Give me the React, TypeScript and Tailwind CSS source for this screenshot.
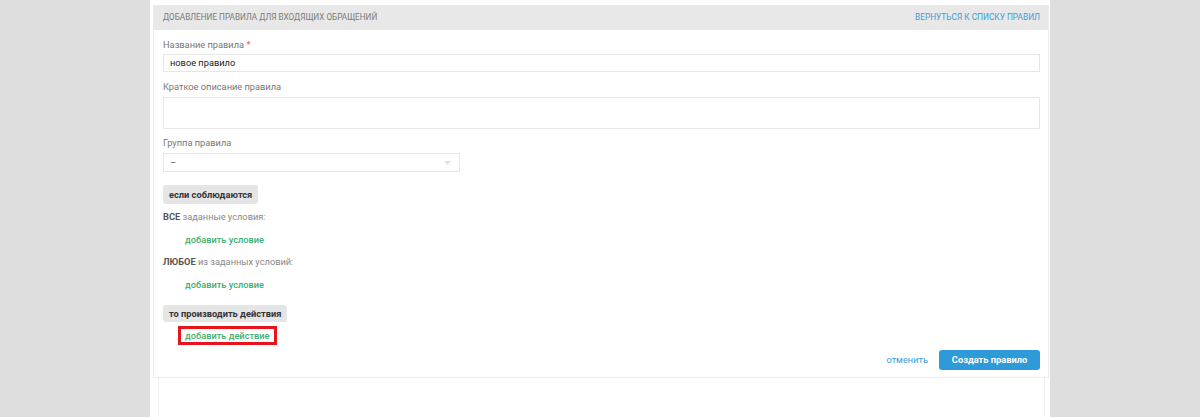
import React from "react";

export default function App() {
  const font = { fontFamily: "Roboto, 'Noto Sans', sans-serif" };
  return (
    <div className="w-full h-[417px] bg-[#dedede] flex justify-center overflow-hidden" style={font}>
      <div className="w-[900px] bg-white pt-[5px] pl-[3px] pr-[1px] flex flex-col">
        <div className="border border-[#ececec] border-t-0 flex flex-col h-[373px]">
          <div className="h-[25px] bg-[#e8e8e8] flex items-center justify-between pl-[9px] pr-[8px] shrink-0">
            <span className="text-[8.2px] text-[#7a7a7a] uppercase">Добавление правила для входящих обращений</span>
            <span className="text-[8.3px] text-[#3d9bd6] uppercase">Вернуться к списку правил</span>
          </div>
          <div className="pl-[9px] pr-[8px] flex flex-col text-[9.25px]">
            <div className="mt-[8px] text-[#777] leading-[14px]">
              Название правила <span className="text-[#e25b5b]">*</span>
            </div>
            <div className="mt-[2px] h-[18px] border border-[#e6e6e6] flex items-center pl-[6px] text-[#222]">новое правило</div>
            <div className="mt-[8px] text-[#777] leading-[14px]">Краткое описание правила</div>
            <div className="mt-[3px] h-[32px] border border-[#e6e6e6]"></div>
            <div className="mt-[7px] text-[#777] leading-[14px]">Группа правила</div>
            <div className="mt-[3px] h-[19px] w-[297px] border border-[#e6e6e6] flex items-center justify-between pl-[6px] pr-[8px] text-[#555]">
              <span>–</span>
              <svg width="7" height="4" viewBox="0 0 7 4"><path d="M0 0 L7 0 L3.5 4 Z" fill="#e0e0e0" /></svg>
            </div>
            <div className="mt-[13px] self-start h-[19px] px-[6px] rounded-[3px] bg-[#e5e5e5] flex items-center font-bold text-[#333]">если соблюдаются</div>
            <div className="mt-[6px] text-[#888] leading-[14px]">
              <span className="font-bold text-[#555]">ВСЕ</span> заданные условия:
            </div>
            <div className="mt-[9px] pl-[22px] font-medium text-[#3eaf6e] leading-[14px]">добавить условие</div>
            <div className="mt-[8px] text-[#888] leading-[14px]">
              <span className="font-bold text-[#555]">ЛЮБОЕ</span> из заданных условий:
            </div>
            <div className="mt-[9px] pl-[22px] font-medium text-[#3eaf6e] leading-[14px]">добавить условие</div>
            <div className="mt-[13px] self-start h-[17px] px-[6px] rounded-[3px] bg-[#e5e5e5] flex items-center font-bold text-[#333]">то производить действия</div>
            <div className="mt-[4px] ml-[15px] self-start border-[3px] border-[#e8141c] h-[19px] px-[4px] flex items-center font-medium text-[#3eaf6e]">добавить действие</div>
            <div className="mt-[5px] flex justify-end items-center gap-[11px]">
              <span className="text-[#3d9bd6]">отменить</span>
              <div className="h-[20px] w-[101px] rounded-[3px] bg-[#2f9ad8] flex items-center justify-center font-bold text-white">Создать правило</div>
            </div>
          </div>
        </div>
        <div className="ml-[5px] mr-[4px] flex-1 border-l border-r border-[#f0f0f0]"></div>
      </div>
    </div>
  );
}
